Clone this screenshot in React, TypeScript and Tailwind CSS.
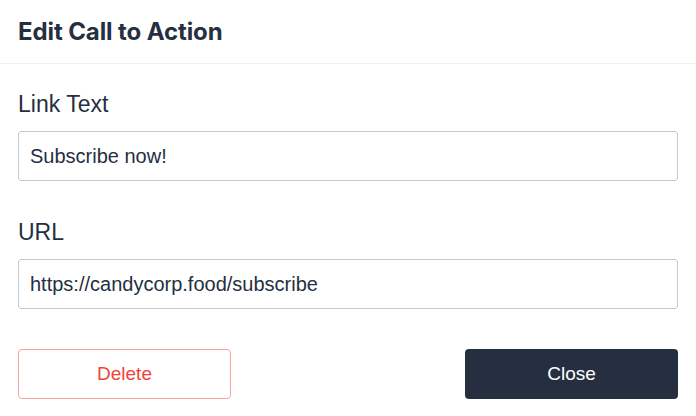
import React from "react";

export default function App() {
  return (
    <div className="w-[696px] h-[416px] bg-white overflow-hidden" style={{ fontFamily: '"Liberation Sans", Arial, sans-serif' }}>
      <div className="h-16 flex items-center px-[18px] border-b border-[#f0f1f3]">
        <h1 className="text-[24px] font-bold text-[#252f3f] tracking-[-0.1px]" style={{ fontFamily: 'Inter, "Liberation Sans", sans-serif' }}>
          Edit Call to Action
        </h1>
      </div>
      <div className="px-[18px] pt-[26px]">
        <label className="block text-[23px] leading-[28px] text-[#252f3f] mb-[13px]">Link Text</label>
        <input
          readOnly
          value="Subscribe now!"
          className="block w-full h-[50px] px-[11px] border border-[#c3c9d2] rounded-[3px] text-[20px] text-[#252f3f] outline-none"
        />
        <label className="block text-[23px] leading-[28px] text-[#252f3f] mt-[37px] mb-[13px]">URL</label>
        <input
          readOnly
          value="https://candycorp.food/subscribe"
          className="block w-full h-[50px] px-[11px] border border-[#c3c9d2] rounded-[3px] text-[20px] text-[#252f3f] outline-none"
        />
        <div className="flex justify-between mt-[40px]">
          <button className="w-[213px] h-[50px] border border-[#f9a39b] rounded-[4px] text-[19px] text-[#f0443a] bg-white">
            Delete
          </button>
          <button className="w-[213px] h-[50px] rounded-[4px] text-[19px] text-white bg-[#252f3f]">
            Close
          </button>
        </div>
      </div>
    </div>
  );
}
